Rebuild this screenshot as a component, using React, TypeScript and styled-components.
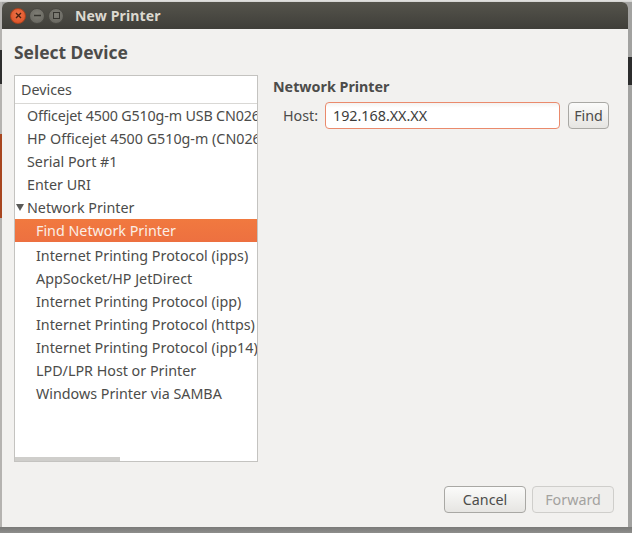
import React from "react";
import styled, { createGlobalStyle } from "styled-components";

const Global = createGlobalStyle`
  html, body { margin: 0; padding: 0; width: 632px; height: 533px; overflow: hidden; }
  * { box-sizing: border-box; }
`;

const FONT = `"Noto Sans", "Open Sans", sans-serif`;

const Desktop = styled.div`
  width: 632px;
  height: 533px;
  padding: 2px 4px 6px 2px;
  font-family: ${FONT};
  color: #4c4c4a;
  background:
    linear-gradient(to bottom, #e4e4e2, #d2d2d0) top / 100% 2px no-repeat,
    linear-gradient(to bottom, #7a7a78 0, #8e8e8c 100%) bottom / 100% 6px no-repeat,
    linear-gradient(to bottom, transparent 0, transparent 57px, #2c2c2c 57px, #2c2c2c 85px, transparent 85px) right / 4px 100% no-repeat,
    linear-gradient(to bottom, #b5b3b0 0, #b5b3b0 50px, #2e2e2e 50px, #2e2e2e 84px, #b5b3b0 84px, #b5b3b0 134px, #a8461f 134px, #a8461f 218px, #b5b3b0 218px) left / 2px 100% no-repeat,
    #a2a2a0;
`;

const Window = styled.div`
  width: 626px;
  height: 525px;
  display: flex;
  flex-direction: column;
  background: #f2f1ef;
  border-radius: 6px 6px 0 0;
  overflow: hidden;
`;

const TitleBar = styled.div`
  height: 27px;
  flex: none;
  display: flex;
  align-items: center;
  padding-left: 8px;
  background: linear-gradient(to bottom, #55544c, #3f3e39);
`;

const WinButton = styled.div<{ $close?: boolean }>`
  width: 16px;
  height: 16px;
  margin-right: 3px;
  border-radius: 50%;
  display: flex;
  align-items: center;
  justify-content: center;
  background: ${(p) =>
    p.$close
      ? "radial-gradient(circle at 50% 40%, #f0764a, #d8491f)"
      : "radial-gradient(circle at 50% 40%, #7f7e76, #63625b)"};
  border: 1px solid ${(p) => (p.$close ? "#a9441f" : "#4a4943")};
`;

const Title = styled.div`
  margin-left: 8px;
  font-size: 14.1px;
  font-weight: 700;
  color: #dcd9d0;
  letter-spacing: 0.1px;
`;

const Content = styled.div`
  flex: 1;
  min-height: 0;
  display: flex;
  flex-direction: column;
  padding: 12px 14px 14px 12px;
`;

const Heading = styled.h1`
  margin: 0 0 12px;
  height: 22px;
  font-size: 17.4px;
  line-height: 22px;
  font-weight: 700;
  color: #4c4c4a;
`;

const Main = styled.div`
  flex: 1;
  min-height: 0;
  display: flex;
  gap: 15px;
`;

const DeviceList = styled.div`
  width: 244px;
  flex: none;
  display: flex;
  flex-direction: column;
  background: #fff;
  border: 1px solid #c4c3c0;
  overflow: hidden;
`;

const ListHeader = styled.div`
  height: 28px;
  flex: none;
  padding-left: 6px;
  display: flex;
  align-items: center;
  font-size: 14.3px;
  border-bottom: 1px solid #d9d8d5;
`;

const Rows = styled.div`
  flex: 1;
  min-height: 0;
`;

const Row = styled.div<{ $level?: number; $selected?: boolean; $tight?: boolean }>`
  height: 23px;
  display: flex;
  align-items: center;
  white-space: nowrap;
  overflow: hidden;
  font-size: 14.3px;
  letter-spacing: ${(p) => (p.$tight ? "-0.16px" : "normal")};
  padding-left: ${(p) => (p.$level === 1 ? 21 : 12)}px;
  margin-bottom: ${(p) => (p.$selected ? 2 : 0)}px;
  color: ${(p) => (p.$selected ? "#fbeee6" : "#4c4c4a")};
  background: ${(p) =>
    p.$selected ? "linear-gradient(to bottom, #f1793f, #ed7040)" : "transparent"};
`;

const Expander = styled.span`
  width: 0;
  height: 0;
  margin-left: -11px;
  margin-right: 3px;
  border-left: 4px solid transparent;
  border-right: 4px solid transparent;
  border-top: 7px solid #5a5a58;
`;

const ScrollTrack = styled.div`
  height: 4px;
  flex: none;
`;

const ScrollThumb = styled.div`
  width: 105px;
  height: 100%;
  background: #cfcecb;
`;

const Pane = styled.div`
  flex: 1;
  min-width: 0;
  padding-top: 2px;
`;

const PaneTitle = styled.div`
  font-size: 14.3px;
  line-height: 20px;
  font-weight: 700;
  color: #4c4c4a;
  margin-bottom: 5px;
`;

const HostRow = styled.div`
  display: flex;
  align-items: center;
  padding-left: 10px;
`;

const HostLabel = styled.label`
  font-size: 14.3px;
  width: 42px;
  flex: none;
`;

const HostInput = styled.div`
  width: 235px;
  height: 27px;
  display: flex;
  align-items: center;
  padding-left: 7px;
  font-size: 14.3px;
  color: #3c3c3a;
  background: linear-gradient(to bottom, #f4f3f1 0, #fff 5px);
  border: 1px solid #ea8a6c;
  border-radius: 4px;
`;

const Button = styled.button<{ $disabled?: boolean; $width: number }>`
  width: ${(p) => p.$width}px;
  height: 27px;
  padding: 0;
  font-family: ${FONT};
  font-size: 14.3px;
  color: ${(p) => (p.$disabled ? "#a3a29f" : "#4c4c4a")};
  background: ${(p) =>
    p.$disabled ? "#efeeec" : "linear-gradient(to bottom, #fbfbfa, #e6e5e2)"};
  border: 1px solid ${(p) => (p.$disabled ? "#cfcecb" : "#a9a8a4")};
  border-radius: 4px;
`;

const FindButton = styled(Button)`
  margin-left: 8px;
`;

const Footer = styled.div`
  flex: none;
  display: flex;
  justify-content: flex-end;
  gap: 6px;
  margin-top: 24px;
`;

const items = [
  "Internet Printing Protocol (ipps)",
  "AppSocket/HP JetDirect",
  "Internet Printing Protocol (ipp)",
  "Internet Printing Protocol (https)",
  "Internet Printing Protocol (ipp14)",
  "LPD/LPR Host or Printer",
  "Windows Printer via SAMBA",
];

export default function App() {
  return (
    <Desktop>
      <Global />
      <Window>
        <TitleBar>
          <WinButton $close>
            <svg width="7" height="7" viewBox="0 0 7 7">
              <path d="M1 1l5 5M6 1L1 6" stroke="#4a2010" strokeWidth="1.4" />
            </svg>
          </WinButton>
          <WinButton>
            <svg width="7" height="7" viewBox="0 0 7 7">
              <path d="M0 3.5h7" stroke="#35342f" strokeWidth="1.4" />
            </svg>
          </WinButton>
          <WinButton>
            <svg width="7" height="7" viewBox="0 0 7 7">
              <rect x="0.5" y="0.5" width="6" height="6" fill="none" stroke="#35342f" />
            </svg>
          </WinButton>
          <Title>New Printer</Title>
        </TitleBar>
        <Content>
          <Heading>Select Device</Heading>
          <Main>
            <DeviceList>
              <ListHeader>Devices</ListHeader>
              <Rows>
                <Row $tight>Officejet 4500 G510g-m USB CN026</Row>
                <Row>HP Officejet 4500 G510g-m (CN026</Row>
                <Row>Serial Port #1</Row>
                <Row>Enter URI</Row>
                <Row>
                  <Expander />
                  Network Printer
                </Row>
                <Row $level={1} $selected>
                  Find Network Printer
                </Row>
                {items.map((t) => (
                  <Row key={t} $level={1}>
                    {t}
                  </Row>
                ))}
              </Rows>
              <ScrollTrack>
                <ScrollThumb />
              </ScrollTrack>
            </DeviceList>
            <Pane>
              <PaneTitle>Network Printer</PaneTitle>
              <HostRow>
                <HostLabel>Host:</HostLabel>
                <HostInput>192.168.XX.XX</HostInput>
                <FindButton $width={41}>Find</FindButton>
              </HostRow>
            </Pane>
          </Main>
          <Footer>
            <Button $width={82}>Cancel</Button>
            <Button $width={82} $disabled>
              Forward
            </Button>
          </Footer>
        </Content>
      </Window>
    </Desktop>
  );
}
